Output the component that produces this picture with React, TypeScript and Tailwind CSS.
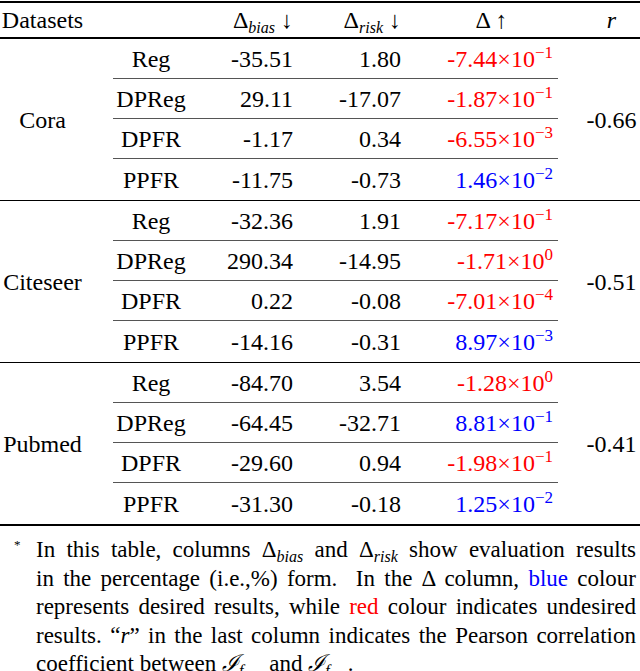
type Item = [string, string, string, string, string, string];

const groups: { name: string; r: string; items: Item[] }[] = [
  {
    name: "Cora",
    r: "-0.66",
    items: [
      ["Reg", "-35.51", "1.80", "-7.44", "−1", "red"],
      ["DPReg", "29.11", "-17.07", "-1.87", "−1", "red"],
      ["DPFR", "-1.17", "0.34", "-6.55", "−3", "red"],
      ["PPFR", "-11.75", "-0.73", "1.46", "−2", "blue"],
    ],
  },
  {
    name: "Citeseer",
    r: "-0.51",
    items: [
      ["Reg", "-32.36", "1.91", "-7.17", "−1", "red"],
      ["DPReg", "290.34", "-14.95", "-1.71", "0", "red"],
      ["DPFR", "0.22", "-0.08", "-7.01", "−4", "red"],
      ["PPFR", "-14.16", "-0.31", "8.97", "−3", "blue"],
    ],
  },
  {
    name: "Pubmed",
    r: "-0.41",
    items: [
      ["Reg", "-84.70", "3.54", "-1.28", "0", "red"],
      ["DPReg", "-64.45", "-32.71", "8.81", "−1", "blue"],
      ["DPFR", "-29.60", "0.94", "-1.98", "−1", "red"],
      ["PPFR", "-31.30", "-0.18", "1.25", "−2", "blue"],
    ],
  },
];

function Sub({ children }: { children: any }) {
  return <span className="italic text-[16px] leading-[0] align-[-0.3em]">{children}</span>;
}

function Sci({ m, e, c }: { m: string; e: string; c: string }) {
  return (
    <span className={c === "red" ? "text-[#ff0000]" : "text-[#0000ff]"}>
      {m}×10<span className="text-[17px] leading-[0] align-[0.55em]">{e}</span>
    </span>
  );
}

// one justified line of the footnote
function Line({ children, last }: { children: any; last?: boolean }) {
  return (
    <div
      className={
        last
          ? "h-[28.5px] leading-[28.5px] whitespace-nowrap"
          : "h-[28.5px] leading-[28.5px] whitespace-nowrap text-justify [text-align-last:justify]"
      }
    >
      {children}
    </div>
  );
}

export default function App() {
  return (
    <div className="w-[640px] h-[671px] bg-white text-black font-['Liberation_Serif'] text-[24px] leading-none overflow-hidden">
      <div className="mt-px border-t-2 border-black">
        {/* header */}
        <div className="flex h-[36px] items-center border-b-2 border-black">
          <div className="w-[113px] pr-[28px] text-center">Datasets</div>
          <div className="w-[76px]" />
          <div className="w-[104px] text-right whitespace-nowrap">
            Δ<Sub>bias</Sub> ↓
          </div>
          <div className="w-[108px] text-right whitespace-nowrap">
            Δ<Sub>risk</Sub> ↓
          </div>
          <div className="w-[157px] pr-[5px] flex justify-end">
            <div className="w-[123px] text-center">Δ ↑</div>
          </div>
          <div className="w-[82px] pl-[25px] text-center italic">r</div>
        </div>

        {groups.map((g, gi) => (
          <div
            key={g.name}
            className={
              gi === groups.length - 1
                ? "flex border-b-2 border-black"
                : "flex border-b border-black"
            }
          >
            <div className="w-[113px] pr-[28px] flex items-center justify-center">{g.name}</div>
            <div className="w-[445px] flex flex-col">
              {g.items.map((it, i) => (
                <div
                  key={it[0]}
                  className={
                    i < 3
                      ? "flex items-center h-[40px] border-b border-[#555]"
                      : "flex items-center h-[41px]"
                  }
                >
                  <div className="w-[76px] text-center">{it[0]}</div>
                  <div className="w-[104px] text-right">{it[1]}</div>
                  <div className="w-[108px] text-right">{it[2]}</div>
                  <div className="w-[157px] pr-[5px] text-right whitespace-nowrap">
                    <Sci m={it[3]} e={it[4]} c={it[5]} />
                  </div>
                </div>
              ))}
            </div>
            <div className="w-[82px] pl-[25px] flex items-center justify-center">{g.r}</div>
          </div>
        ))}
      </div>

      {/* footnote */}
      <div className="flex pt-[10px] text-[23px]">
        <div className="w-[36px] pl-[14px] text-[13px] leading-[18px]">*</div>
        <div className="w-[600px]">
          <Line>
            In this table, columns Δ<Sub>bias</Sub> and Δ<Sub>risk</Sub> show evaluation results
          </Line>
          <Line>
            in the percentage (i.e.,%) form.&nbsp; In the Δ column,{" "}
            <span className="text-[#0000ff]">blue</span> colour
          </Line>
          <Line>
            represents desired results, while <span className="text-[#ff0000]">red</span> colour
            indicates undesired
          </Line>
          <Line>
            results. “<span className="italic">r</span>” in the last column indicates the Pearson
            correlation
          </Line>
          <Line last>
            coefficient between <span className="italic">ℐ</span>
            <span className="italic text-[16px] leading-[0] align-[-0.3em]">
              f<span className="text-[12px] align-[-0.3em]">bias</span>
            </span>{" "}
            and <span className="italic">ℐ</span>
            <span className="italic text-[16px] leading-[0] align-[-0.3em]">
              f<span className="text-[12px] align-[-0.3em]">risk</span>
            </span>
            .
          </Line>
        </div>
      </div>
    </div>
  );
}
